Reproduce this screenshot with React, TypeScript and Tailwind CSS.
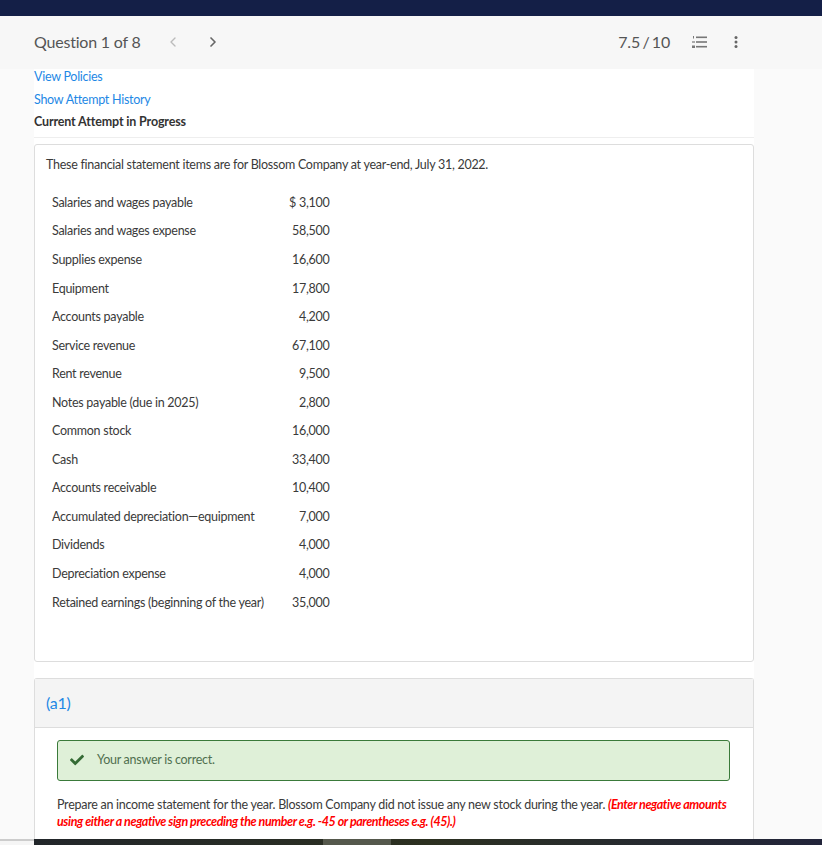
import { ChevronLeft, ChevronRight } from "lucide-react"
import { FaCheck } from "react-icons/fa"

const rows = [
  ["Salaries and wages payable", "$\u00a03,100"],
  ["Salaries and wages expense", "58,500"],
  ["Supplies expense", "16,600"],
  ["Equipment", "17,800"],
  ["Accounts payable", "4,200"],
  ["Service revenue", "67,100"],
  ["Rent revenue", "9,500"],
  ["Notes payable (due in 2025)", "2,800"],
  ["Common stock", "16,000"],
  ["Cash", "33,400"],
  ["Accounts receivable", "10,400"],
  ["Accumulated depreciation—equipment", "7,000"],
  ["Dividends", "4,000"],
  ["Depreciation expense", "4,000"],
  ["Retained earnings (beginning of the year)", "35,000"],
]

export default function App() {
  return (
    <div className="h-[845px] overflow-hidden bg-[#fafafa] font-['Lato',sans-serif] text-[12.5px] tracking-[-0.27px] text-[#3a3a3a]">
      <div className="h-4 bg-[#141f47]" />

      {/* Header */}
      <div className="flex h-[53px] items-center justify-between bg-[#f7f7f7] pb-[1px] pl-[34px] pr-[84px]">
        <div className="flex items-center">
          <span className="text-[16px] tracking-[-0.2px] text-[#555]">Question 1 of 8</span>
          <ChevronLeft className="ml-[24px] h-4 w-4 text-[#bbb]" strokeWidth={2} />
          <ChevronRight className="ml-[24px] h-4 w-4 text-[#666]" strokeWidth={2.5} />
        </div>
        <div className="flex items-center">
          <span className="text-[16px] tracking-[-0.2px] text-[#555] [word-spacing:-1.5px]">7.5 / 10</span>
          <svg className="ml-[22px] h-3 w-[15px]" viewBox="0 0 15 12" fill="#777">
            <rect x="4" y="0.5" width="11" height="1.6" />
            <rect x="4" y="5.2" width="11" height="1.6" />
            <rect x="4" y="9.9" width="11" height="1.6" />
            <rect x="1" y="0" width="1" height="2.5" />
            <rect x="0" y="5" width="3" height="2" fill="#aaa" />
            <rect x="0" y="9.5" width="3" height="2.5" />
          </svg>
          <svg className="ml-[27px] h-3 w-1" viewBox="0 0 4 12" fill="#666">
            <circle cx="2" cy="1.5" r="1.5" />
            <circle cx="2" cy="6" r="1.5" />
            <circle cx="2" cy="10.5" r="1.5" />
          </svg>
        </div>
      </div>

      <div className="ml-[34px] h-[770px] w-[720px] bg-white">
        {/* Links */}
        <div className="h-[69px] border-b border-[#eee]">
          <a className="block leading-[15px] text-[#1e88e5]">View Policies</a>
          <a className="mt-2 block leading-[15px] text-[#1e88e5]">Show Attempt History</a>
          <div className="mt-[7px] font-bold leading-[15px] tracking-[-0.15px] text-[#333]">Current Attempt in Progress</div>
        </div>

        {/* Question text */}
        <div className="mt-[6px] h-[518px] rounded-[3px] border border-[#ddd] pl-[11px] pt-[12px]">
          <p className="leading-[15px]">
            These financial statement items are for Blossom Company at year-end, July 31, 2022.
          </p>
          <table className="ml-[6px] mt-[17px] border-collapse">
            <tbody>
              {rows.map(([label, amount]) => (
                <tr key={label} className="h-[28.55px]">
                  <td className="w-[237px] whitespace-nowrap p-0 align-middle">{label}</td>
                  <td className="w-[40px] whitespace-nowrap p-0 pr-[1px] text-right align-middle">{amount}</td>
                </tr>
              ))}
            </tbody>
          </table>
        </div>

        {/* Part a1 */}
        <div className="mt-[16px] h-[161px] rounded-t-[3px] border-x border-t border-[#ddd]">
          <div className="flex h-[49px] items-center border-b border-[#ddd] bg-[#f4f4f4] pl-[11px] text-[16px] tracking-[-0.2px] text-[#1e88e5]">
            (a1)
          </div>
          <div className="pl-[22px] pr-[23px] pt-3">
            <div className="flex h-[41px] items-center rounded-[3px] border border-[#3a7a3a] bg-[#dff0d8] pb-[1px] pl-3 text-[#4f6f4f]">
              <FaCheck className="h-[14px] w-[14px] text-[#356b35]" />
              <span className="ml-[13px]">Your answer is correct.</span>
            </div>
            <p className="mt-[15px] leading-[17px]">
              Prepare an income statement for the year. Blossom Company did not issue any new stock during the year.{" "}
              <strong className="font-bold italic tracking-[-0.42px] text-[#f00]">
                (Enter negative amounts using either a negative sign preceding the number e.g. -45 or parentheses e.g. (45).)
              </strong>
            </p>
          </div>
        </div>
      </div>

      {/* Strip along the bottom edge */}
      <div className="flex h-[6px]">
        <div className="h-full w-[34px] border-t-2 border-[#ccc] bg-[#f5f5f5]" />
        <div className="flex flex-1 bg-gradient-to-r from-[#22262a] via-[#2c3020] to-[#22243a]">
          <div className="ml-[289px] h-full w-[68px] bg-[#55584c]" />
        </div>
      </div>
    </div>
  )
}
